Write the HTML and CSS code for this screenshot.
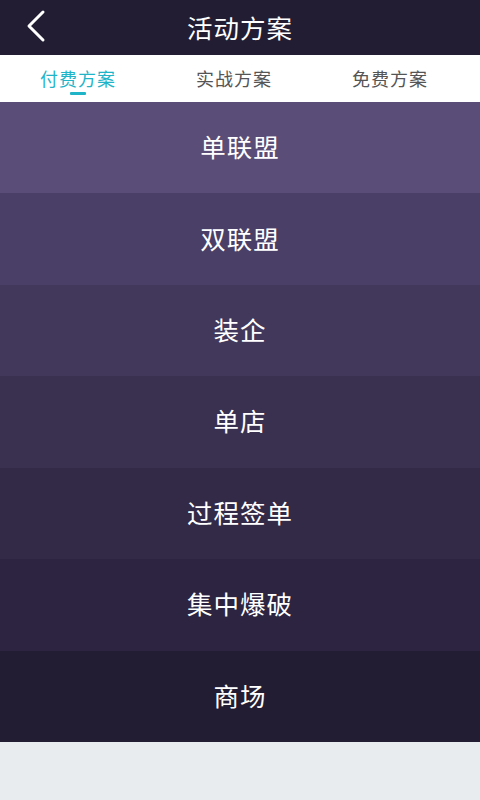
FILE: index.html
```html
<!DOCTYPE html>
<html lang="zh">
<head>
<meta charset="utf-8">
<link rel="stylesheet" href="styles.css">
</head>
<body>
<div class="app">
  <header class="topbar">
    <span class="back">
      <svg width="24" height="36" viewBox="0 0 24 36"><polyline points="18,4 4,18 18,32" fill="none" stroke="#fff" stroke-width="3" stroke-linecap="round" stroke-linejoin="round"/></svg>
    </span>
    <h1 class="title">活动方案</h1>
  </header>
  <nav class="tabs">
    <div class="tab active">付费方案<span class="bar"></span></div>
    <div class="tab">实战方案</div>
    <div class="tab">免费方案</div>
  </nav>
  <ul class="list">
    <li class="row r1">单联盟</li>
    <li class="row r2">双联盟</li>
    <li class="row r3">装企</li>
    <li class="row r4">单店</li>
    <li class="row r5">过程签单</li>
    <li class="row r6">集中爆破</li>
    <li class="row r7">商场</li>
  </ul>
  <div class="footer"></div>
</div>
</body>
</html>
```
FILE: styles.css
```css
* { box-sizing: border-box; margin: 0; padding: 0; }
html, body { width: 480px; height: 800px; overflow: hidden; }
body { font-family: "Noto Sans CJK SC", "Noto Sans", sans-serif; background: #e9ecee; }
.app { display: flex; flex-direction: column; height: 800px; }
.topbar {
  height: 55px; background: #221d33; position: relative;
  display: flex; align-items: center; justify-content: center;
  padding-bottom: 2px;
}
.back { position: absolute; left: 25px; top: 8px; width: 24px; height: 36px; }
.back svg { display: block; }
.title { color: #fff; font-size: 25.5px; font-weight: 400; letter-spacing: 1px; line-height: 1; }
.tabs {
  height: 47px; background: #fff;
  display: grid; grid-template-columns: repeat(3, 156px);
}
.tab {
  position: relative; display: flex; align-items: center; justify-content: center;
  font-size: 18px; letter-spacing: 1px; color: #555; padding-bottom: 2px;
}
.tab.active { color: #1fb4c8; }
.bar {
  position: absolute; left: 70px; top: 37px; width: 16px; height: 3px;
  background: #1fb4c8; border-radius: 1px;
}
.list { list-style: none; display: flex; flex-direction: column; }
.row {
  height: 91.43px; display: flex; align-items: center; justify-content: center;
  color: #fff; font-size: 25.5px; letter-spacing: 1px; padding-bottom: 4px;
}
.r1 { background: #5a4d77; }
.r2 { background: #4a3f66; }
.r3 { background: #41385b; }
.r4 { background: #3a3150; }
.r5 { background: #332a48; }
.r6 { background: #2c2441; }
.r7 { background: #231d33; }
.footer { flex: 1; background: #e9ecee; }
```
